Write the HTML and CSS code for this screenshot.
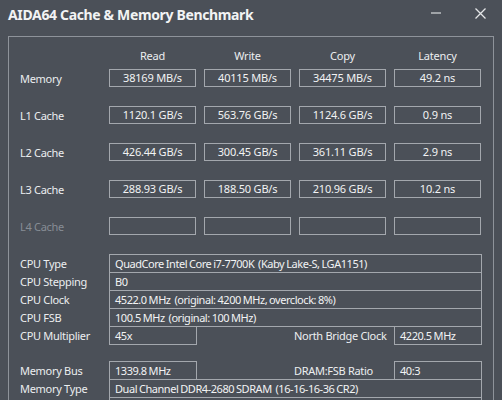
FILE: index.html
```html
<!DOCTYPE html>
<html>
<head>
<meta charset="utf-8">
<link rel="stylesheet" href="styles.css">
</head>
<body>
<div class="window">
  <div class="titlebar">
    <span class="title">AIDA64 Cache &amp; Memory Benchmark</span>
    <span class="controls">
      <svg class="min" width="12" height="12" viewBox="0 0 12 12"><line x1="1" y1="6" x2="11" y2="6" stroke="#d8dadd" stroke-width="1.2"/></svg>
      <svg class="close" width="13" height="13" viewBox="0 0 13 13"><path d="M1.5 1.5 L11.5 11.5 M11.5 1.5 L1.5 11.5" stroke="#e4e6e8" stroke-width="1.3" fill="none"/></svg>
    </span>
  </div>
  <div class="frame">
    <div class="bench">
      <div class="brow head">
        <span class="lbl"></span>
        <span class="hd">Read</span><span class="hd">Write</span><span class="hd">Copy</span><span class="hd">Latency</span>
      </div>
      <div class="brow">
        <span class="lbl">Memory</span>
        <span class="box">38169 MB/s</span><span class="box">40115 MB/s</span><span class="box">34475 MB/s</span><span class="box">49.2 ns</span>
      </div>
      <div class="brow">
        <span class="lbl">L1 Cache</span>
        <span class="box">1120.1 GB/s</span><span class="box">563.76 GB/s</span><span class="box">1124.6 GB/s</span><span class="box">0.9 ns</span>
      </div>
      <div class="brow">
        <span class="lbl">L2 Cache</span>
        <span class="box">426.44 GB/s</span><span class="box">300.45 GB/s</span><span class="box">361.11 GB/s</span><span class="box">2.9 ns</span>
      </div>
      <div class="brow">
        <span class="lbl">L3 Cache</span>
        <span class="box">288.93 GB/s</span><span class="box">188.50 GB/s</span><span class="box">210.96 GB/s</span><span class="box">10.2 ns</span>
      </div>
      <div class="brow">
        <span class="lbl dim">L4 Cache</span>
        <span class="box"></span><span class="box"></span><span class="box"></span><span class="box"></span>
      </div>
    </div>

    <div class="info">
      <div class="irow"><span class="lbl">CPU Type</span><span class="ibox wide">QuadCore Intel Core i7-7700K&nbsp; (Kaby Lake-S, LGA1151)</span></div>
      <div class="irow"><span class="lbl">CPU Stepping</span><span class="ibox wide">B0</span></div>
      <div class="irow"><span class="lbl">CPU Clock</span><span class="ibox wide">4522.0 MHz&nbsp; (original: 4200 MHz, overclock: 8%)</span></div>
      <div class="irow"><span class="lbl">CPU FSB</span><span class="ibox wide">100.5 MHz&nbsp; (original: 100 MHz)</span></div>
      <div class="irow"><span class="lbl">CPU Multiplier</span><span class="ibox short">45x</span><span class="lbl2">North Bridge Clock</span><span class="ibox short">4220.5 MHz</span></div>
    </div>

    <div class="info mem">
      <div class="irow"><span class="lbl">Memory Bus</span><span class="ibox short">1339.8 MHz</span><span class="lbl2">DRAM:FSB Ratio</span><span class="ibox short">40:3</span></div>
      <div class="irow"><span class="lbl">Memory Type</span><span class="ibox wide">Dual Channel DDR4-2680 SDRAM&nbsp; (16-16-16-36 CR2)</span></div>
      <div class="irow"><span class="lbl"></span><span class="ibox wide"></span></div>
    </div>
  </div>
</div>
</body>
</html>
```

FILE: styles.css
```css
html, body {
  margin: 0;
  padding: 0;
  background: #4b5058;
  overflow: hidden;
}
.window {
  width: 502px;
  height: 400px;
  background: #4b5058;
  font-family: "Noto Sans", "Open Sans", sans-serif;
  color: #e4e6e8;
  overflow: hidden;
}
.titlebar {
  height: 36px;
  display: flex;
  align-items: flex-start;
  justify-content: space-between;
  padding: 0 0 0 8px;
  box-sizing: border-box;
}
.title {
  font-weight: bold;
  font-size: 14px;
  color: #f2f3f4;
  margin-top: 5px;
  letter-spacing: -0.35px;
}
.controls {
  display: flex;
  align-items: flex-start;
}
.min { margin-top: 7px; margin-right: 32px; }
.close { margin-top: 7px; margin-right: 15px; }

.frame {
  margin-left: 8px;
  width: 486px;
  height: 380px;
  border: 1px solid #8e939a;
  box-sizing: border-box;
  padding: 9px 0 0 11px;
}
.bench {
  display: flex;
  flex-direction: column;
  gap: 19px;
}
.brow {
  display: flex;
  align-items: center;
  height: 18px;
  gap: 8px;
}
.brow.head {
  margin-bottom: -14px;
}
.lbl {
  width: 89px;
  margin-right: -8px;
  font-size: 11px;
  letter-spacing: -0.3px;
  color: #eceef0;
  white-space: nowrap;
  flex: none;
}
.irow .lbl { margin-right: 0; }
.lbl.dim { color: #878d95; }
.hd {
  width: 87px;
  text-align: center;
  font-size: 11px;
  letter-spacing: -0.2px;
  color: #eceef0;
}
.box {
  width: 87px;
  height: 18px;
  box-sizing: border-box;
  border: 1px solid #a3a7ad;
  font-size: 11px;
  letter-spacing: -0.2px;
  line-height: 16px;
  text-align: center;
  color: #f2f3f4;
  flex: none;
}
.info {
  margin-top: 19px;
  display: flex;
  flex-direction: column;
}
.info.mem { margin-top: 16px; }
.irow {
  display: flex;
  align-items: center;
  height: 19px;
  margin-top: -1px;
}
.irow:first-child { margin-top: 0; }
.ibox {
  height: 19px;
  box-sizing: border-box;
  border: 1px solid #a3a7ad;
  font-size: 11px;
  letter-spacing: -0.45px;
  word-spacing: -0.5px;
  line-height: 17px;
  padding-left: 5px;
  color: #f2f3f4;
  white-space: nowrap;
  overflow: hidden;
  flex: none;
}
.ibox.wide { width: 373px; }
.ibox.short { width: 88px; }
.lbl2 {
  width: 100px;
  margin-left: 97px;
  font-size: 11px;
  letter-spacing: -0.3px;
  color: #eceef0;
  white-space: nowrap;
  flex: none;
}
```
